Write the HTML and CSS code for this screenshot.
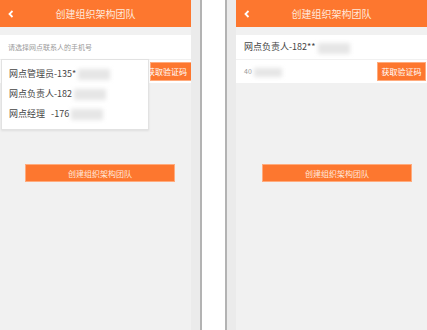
FILE: index.html
```html
<!DOCTYPE html>
<html>
<head>
  <meta charset="UTF-8">
  <title>创建组织架构团队</title>
  <link rel="stylesheet" href="styles.css">
</head>
<body>
  <div class="screens">

    <div class="phone phone-left">
      <header class="bar">
        <svg class="back" width="6" height="8" viewBox="0 0 6 8"><polyline points="4.5,1 1.5,4 4.5,7" fill="none" stroke="#fff" stroke-width="1.8"/></svg>
        <h1 class="title">创建组织架构团队</h1>
      </header>
      <div class="form">
        <div class="row">
          <span class="placeholder">请选择网点联系人的手机号</span>
        </div>
        <div class="row row-code">
          <span class="code"></span>
          <button class="btn-code">获取验证码</button>
        </div>
      </div>
      <ul class="dropdown">
        <li>网点管理员-135*<span class="blur"></span></li>
        <li>网点负责人-182<span class="blur"></span></li>
        <li>网点经理&nbsp;&nbsp;&nbsp;-176<span class="blur"></span></li>
      </ul>
      <div class="btn-wrap">
        <button class="btn-create">创建组织架构团队</button>
      </div>
    </div>

    <div class="gap">
      <div class="gap-side"></div>
      <div class="gap-line"></div>
      <div class="gap-mid"></div>
      <div class="gap-line"></div>
      <div class="gap-side"></div>
    </div>

    <div class="phone phone-right">
      <header class="bar">
        <svg class="back" width="6" height="8" viewBox="0 0 6 8"><polyline points="4.5,1 1.5,4 4.5,7" fill="none" stroke="#fff" stroke-width="1.8"/></svg>
        <h1 class="title">创建组织架构团队</h1>
      </header>
      <div class="form">
        <div class="row">
          <span class="phone-num">网点负责人-182**<span class="blur"></span></span>
        </div>
        <div class="row row-code">
          <span class="code">40<span class="blur blur-small"></span></span>
          <button class="btn-code">获取验证码</button>
        </div>
      </div>
      <div class="btn-wrap">
        <button class="btn-create">创建组织架构团队</button>
      </div>
    </div>

  </div>
</body>
</html>
```

FILE: styles.css
```css
* {
  box-sizing: border-box;
}
html, body {
  margin: 0;
  padding: 0;
  background-color: #f1f1f1;
}
body, button {
  font-family: "Microsoft YaHei", "Noto Sans CJK SC", sans-serif;
}
.screens {
  display: flex;
  height: 330px;
}
.phone {
  position: relative;
  width: 191px;
  background-color: #f1f1f1;
}
.bar {
  display: flex;
  align-items: center;
  height: 27px;
  padding-left: 8px;
  background-color: #fd772f;
}
.back {
  display: block;
}
.title {
  flex: 1;
  margin: 0;
  padding-right: 14px;
  font-size: 10px;
  font-weight: normal;
  text-align: center;
  color: #ffe9dc;
}
.form {
  margin-top: 8px;
  background-color: #fff;
}
.row {
  display: flex;
  align-items: center;
  height: 24px;
  padding-left: 8px;
}
.row + .row {
  border-top: 1px solid #f1f1f1;
}
.placeholder {
  font-size: 7px;
  color: #9a9a9a;
}
.phone-num {
  font-size: 9px;
  color: #444;
}
.code {
  flex: 1;
  font-size: 7px;
  color: #999;
}
.btn-code {
  width: 49px;
  height: 19px;
  margin-right: 1px;
  padding: 0;
  border: 1px solid #ffab7d;
  background-color: #fd772f;
  color: #fff;
  font-size: 8px;
}
.phone-left .btn-code {
  width: 41px;
  margin-right: 0;
  border-right: none;
  text-indent: -8px;
}
.blur {
  display: inline-block;
  width: 32px;
  height: 11px;
  margin-left: 2px;
  vertical-align: middle;
  background-color: #e6e6e6;
  filter: blur(2px);
}
.blur-small {
  width: 28px;
  height: 9px;
}
.dropdown {
  position: absolute;
  left: 1px;
  top: 59px;
  width: 148px;
  height: 71px;
  margin: 0;
  padding: 6px 0 0 7px;
  list-style: none;
  background-color: #fff;
  border: 1px solid #e2e2e2;
  box-shadow: 0 1px 2px rgba(0,0,0,0.08);
}
.dropdown li {
  height: 20px;
  line-height: 16px;
  font-size: 9px;
  color: #444;
}
.btn-wrap {
  margin-top: 81px;
  padding-left: 25px;
}
.phone-right .btn-wrap {
  padding-left: 26px;
}
.btn-create {
  display: block;
  width: 150px;
  height: 18px;
  padding: 0;
  border: 1px solid #ffab7d;
  background-color: #fd772f;
  color: #ffe9dc;
  font-size: 8px;
}
.gap {
  display: flex;
  width: 45px;
}
.gap-side {
  width: 9px;
  background-color: #ebebeb;
}
.gap-line {
  width: 2px;
  background-color: #b3b3b3;
}
.gap-mid {
  width: 23px;
  background-color: #fff;
}
```
